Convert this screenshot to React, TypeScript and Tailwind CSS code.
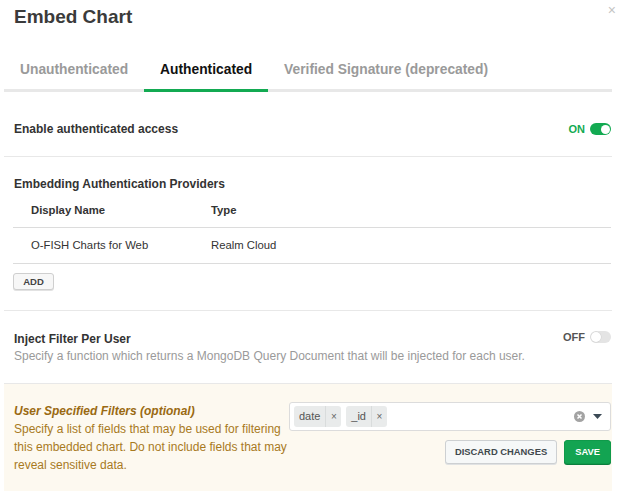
import React from "react";

function Toggle({ on }: { on: boolean }) {
  return on ? (
    <div className="w-[21px] h-[12px] rounded-full bg-[#13aa52] flex items-center justify-end pr-[1.5px]">
      <div className="w-[9px] h-[9px] rounded-full bg-white" />
    </div>
  ) : (
    <div className="w-[21px] h-[12px] rounded-full bg-[#e4e4e4] flex items-center pl-[1px]">
      <div className="w-[10px] h-[10px] rounded-full bg-white shadow-[0_0_0_0.5px_#d0d0d0]" />
    </div>
  );
}

function Tag({ label }: { label: string }) {
  return (
    <div className="flex h-[21px] items-stretch rounded-[3px] bg-[#e9ebeb] text-[11px] text-[#555]">
      <span className="flex items-center px-[5px]">{label}</span>
      <span className="flex items-center border-l border-[#d9dcdc] px-[4.5px] text-[10px] text-[#666]">×</span>
    </div>
  );
}

export default function App() {
  return (
    <div
      className="relative w-[628px] h-[491px] overflow-hidden bg-white text-[#333]"
      style={{ fontFamily: '"Liberation Sans", Arial, sans-serif' }}
    >
      <div className="absolute right-[12px] top-[0px] text-[14px] text-[#c4c4c4]">×</div>
      <h1 className="px-[14px] pt-[5px] text-[19px] font-bold leading-[24px] text-[#3b3b3b]">Embed Chart</h1>

      <div className="mx-[4px] mt-[32px] w-[608px] flex border-b-[3px] border-[#e8e8e8] text-[13.8px] font-bold">
        <div className="px-[16px] pb-[11px] text-[#9a9a9a] leading-[17px] -mb-[3px] border-b-[3px] border-transparent">Unauthenticated</div>
        <div className="px-[16px] pb-[11px] text-[#111] leading-[17px] -mb-[3px] border-b-[3px] border-[#13aa52]">Authenticated</div>
        <div className="px-[16px] pb-[11px] text-[#9a9a9a] leading-[17px] -mb-[3px] border-b-[3px] border-transparent">Verified Signature (deprecated)</div>
      </div>

      <div className="mx-[4px] w-[608px]">
        <div className="flex items-center justify-between pl-[10px] pr-[1px] pt-[28px] pb-[18px] border-b border-[#e8e8e8]">
          <div className="text-[12px] font-bold leading-[18px] text-[#333]">Enable authenticated access</div>
          <div className="flex items-center gap-[5px]">
            <span className="text-[11px] font-bold text-[#13aa52]">ON</span>
            <Toggle on />
          </div>
        </div>

        <div className="pl-[9px] pr-[1px] pt-[18px] pb-[18px] border-b border-[#e8e8e8]">
          <div className="pl-[1px] text-[12px] font-bold leading-[18px] text-[#333]">Embedding Authentication Providers</div>
          <div className="flex h-[35px] items-center border-b border-[#dcdcdc] text-[11.3px] font-bold text-[#333]">
            <div className="w-[198px] pl-[18px]">Display Name</div>
            <div>Type</div>
          </div>
          <div className="flex h-[36px] items-center border-b border-[#dcdcdc] text-[11.3px] text-[#333]">
            <div className="w-[198px] pl-[18px]">O-FISH Charts for Web</div>
            <div>Realm Cloud</div>
          </div>
          <button className="mt-[9px] h-[17px] w-[41px] rounded-[3px] border border-[#cfcfcf] bg-[#f7f7f7] text-[9.5px] font-bold leading-[15px] text-[#444] shadow-[0_1px_0_#e2e2e2]">
            ADD
          </button>
        </div>

        <div className="relative pl-[10px] pr-[1px] pt-[19px] pb-[18px] border-b border-[#e8e8e8]">
          <div className="text-[12px] font-bold leading-[18px] text-[#333]">Inject Filter Per User</div>
          <div className="text-[12px] leading-[17px] text-[#9a9a9a]">
            Specify a function which returns a MongoDB Query Document that will be injected for each user.
          </div>
          <div className="absolute right-[1px] top-[18px] flex items-center gap-[5px]">
            <span className="text-[11px] font-bold text-[#555]">OFF</span>
            <Toggle on={false} />
          </div>
        </div>

        <div className="flex h-[120px] bg-[#fdf9f0] pl-[10px] pr-[1px] pt-[18px]">
          <div className="w-[275px] shrink-0 text-[#a87a1e]">
            <div className="text-[12px] font-bold italic leading-[18px] text-[#9a6a12]">User Specified Filters (optional)</div>
            <div className="text-[12px] leading-[18px] whitespace-nowrap">
              Specify a list of fields that may be used for filtering
              <br />
              this embedded chart. Do not include fields that may
              <br />
              reveal sensitive data.
            </div>
          </div>
          <div className="flex-1">
            <div className="flex h-[29px] items-center rounded-[3px] border border-[#dcdcdc] bg-white pl-[4px] pr-[8px]">
              <div className="flex flex-1 gap-[5px]">
                <Tag label="date" />
                <Tag label="_id" />
              </div>
              <svg width="11" height="11" viewBox="0 0 11 11" className="mr-[8px]">
                <circle cx="5.5" cy="5.5" r="5.5" fill="#a3a3a3" />
                <path d="M3.5 3.5 L7.5 7.5 M7.5 3.5 L3.5 7.5" stroke="#fff" strokeWidth="1.5" />
              </svg>
              <svg width="9" height="5" viewBox="0 0 9 5">
                <path d="M0 0 H9 L4.5 5 Z" fill="#3c4a55" />
              </svg>
            </div>
            <div className="mt-[9px] flex justify-end gap-[7px]">
              <button className="h-[24px] rounded-[3px] border border-[#cdd0d2] bg-[#f6f8f8] px-[9px] text-[9.4px] font-bold text-[#40484d] shadow-[0_1px_0_#e0e2e3]">
                DISCARD CHANGES
              </button>
              <button className="h-[24px] rounded-[3px] border border-[#0f9a4a] bg-[#13a452] px-[10px] text-[9.4px] font-bold text-white shadow-[0_1px_0_#0c7e3d]">
                SAVE
              </button>
            </div>
          </div>
        </div>
      </div>
    </div>
  );
}
